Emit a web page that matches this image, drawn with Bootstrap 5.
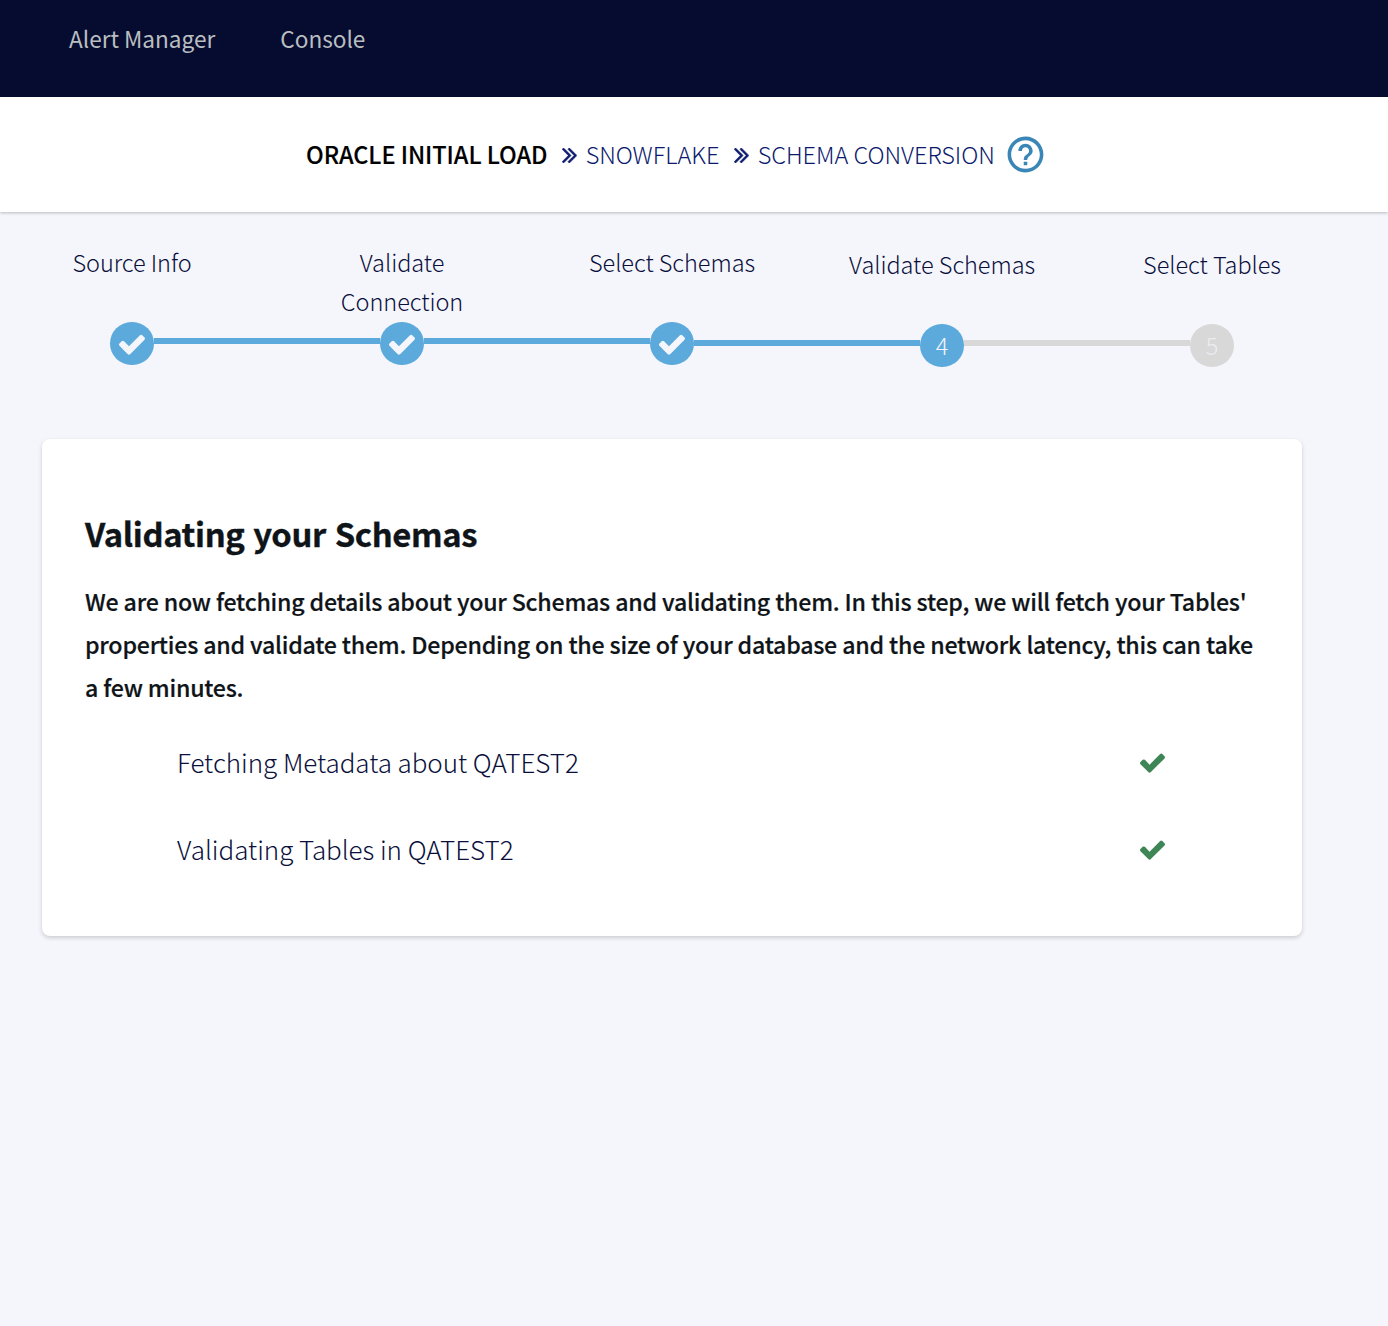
<!DOCTYPE html>
<html lang="en">
<head>
<meta charset="utf-8">
<meta name="viewport" content="width=device-width, initial-scale=1">
<title>Schema Conversion</title>
<link href="https://cdn.jsdelivr.net/npm/bootstrap@5.3.0/dist/css/bootstrap.min.css" rel="stylesheet">
<style>
  body { font-family: "Noto Sans CJK SC", "Noto Sans", sans-serif; background: #f5f6fc; color: #0a0f3c; min-height: 1326px; }
  .topbar { height: 97px; background: #060c2f; padding: 0 69px; gap: 65px; }
  .topbar .nav-link { color: #b9bfc0; font-size: 22.6px; line-height: 78px; }
  .crumbs { height: 115px; padding-left: 306px; font-size: 23.5px; line-height: 40px; font-weight: 300; letter-spacing: -.04px; color: #0b1a6e; box-shadow: 0 1px 3px rgba(0,0,0,.24); }
  .crumbs span { padding-bottom: 2px; }
  .crumbs .origin { color: #000; font-weight: 500; letter-spacing: -.05px; -webkit-text-stroke: .15px #000; }
  .chev { width: 15px; height: 15px; fill: #0b1a6e; }
  .chev-a { margin: 2px 9px 0 14.3px; }
  .help { width: 43px; height: 43px; fill: #3a87b7; margin: 0 0 0 9px; }
  .wizard { margin: 32px 86px 0 42px; }
  .labels { margin: -1px -10px 1px; }
  .step-label { width: 200px; height: 78px; font-size: 23.5px; line-height: 39px; font-weight: 300; letter-spacing: -.04px; text-align: center; }
  .step-narrow { padding: 0 35px; }
  .later { position: relative; top: 2px; }
  .track { padding: 0 68px; height: 43px; }
  .dot { width: 44px; height: 43px; border-radius: 22px; background: #5ca9dc; color: #f5f6fc; font-size: 23.5px; font-weight: 300; line-height: 42px; flex: none; }
  .dot svg { width: 26px; height: 21px; fill: #f5f6fc; margin-top: 2px; }
  .bar { height: 6px; margin-top: -5px; background: #5ca9dc; }
  .todo { background: #d8d8d8; color: #ececf0; }
  .panel { margin: 74px 86px 0 42px; height: 497px; padding: 69px 43px 0; border-radius: 8px; background: #fff; box-shadow: 0 2px 4px rgba(0,0,0,.17); color: #0f1419; }
  .panel h1 { font-size: 32.8px; line-height: 50px; font-weight: 700; letter-spacing: -.35px; word-spacing: 1.5px; -webkit-text-stroke: .35px #0f1419; margin: 0 0 22px; }
  .intro { font-size: 23.2px; line-height: 43px; font-weight: 500; letter-spacing: -.24px; word-spacing: .2px; margin: 0 0 32px; -webkit-text-stroke: .2px #0f1419; white-space: nowrap; }
  .task { height: 44px; margin: 0 94px 43px 92px; font-size: 26px; line-height: 42px; font-weight: 300; letter-spacing: -.04px; color: #0a0f3c; }
  .task span { padding-bottom: 2px; }
  .task svg { width: 25px; height: 20px; fill: #3f8657; }
</style>
<script src="https://cdn.jsdelivr.net/npm/bootstrap@5.3.0/dist/js/bootstrap.bundle.min.js"></script>
</head>
<body>
<svg class="d-none">
  <symbol id="check" viewBox="121 314 1550 1208"><path d="M1671 566q0 40-28 68l-724 724-136 136q-28 28-68 28t-68-28l-136-136-362-362q-28-28-28-68t28-68l136-136q28-28 68-28t68 28l294 295 656-657q28-28 68-28t68 28l136 136q28 28 28 68z"/></symbol>
  <symbol id="angles" viewBox="380 461 998 998"><path stroke="#0b1a6e" stroke-width="36" d="M979 960q0 13-10 23l-466 466q-10 10-23 10t-23-10l-50-50q-10-10-10-23t10-23l393-393-393-393q-10-10-10-23t10-23l50-50q10-10 23-10t23 10l466 466q10 10 10 23zm384 0q0 13-10 23l-466 466q-10 10-23 10t-23-10l-50-50q-10-10-10-23t10-23l393-393-393-393q-10-10-10-23t10-23l50-50q10-10 23-10t23 10l466 466q10 10 10 23z"/></symbol>
</svg>

<nav class="topbar d-flex align-items-start">
  <a class="nav-link" href="#">Alert Manager</a>
  <a class="nav-link" href="#">Console</a>
</nav>

<header class="crumbs bg-white d-flex align-items-center text-nowrap">
  <span class="origin">ORACLE INITIAL LOAD</span>
  <svg class="chev chev-a"><use href="#angles"/></svg>
  <span>SNOWFLAKE</span>
  <svg class="chev chev-a"><use href="#angles"/></svg>
  <span>SCHEMA CONVERSION</span>
  <svg class="help" viewBox="0 0 24 24"><path d="M11 18h2v-2h-2v2zm1-16C6.48 2 2 6.48 2 12s4.48 10 10 10 10-4.48 10-10S17.52 2 12 2zm0 18c-4.41 0-8-3.59-8-8s3.59-8 8-8 8 3.59 8 8-3.59 8-8 8zm0-14c-2.21 0-4 1.79-4 4h2c0-1.1.9-2 2-2s2 .9 2 2c0 2-3 1.75-3 5h2c0-2.25 3-2.5 3-5 0-2.21-1.79-4-4-4z"/></svg>
</header>

<section class="wizard">
  <div class="labels d-flex justify-content-between">
    <div class="step-label">Source Info</div>
    <div class="step-label step-narrow">Validate Connection</div>
    <div class="step-label">Select Schemas</div>
    <div class="step-label later">Validate Schemas</div>
    <div class="step-label later">Select Tables</div>
  </div>
  <div class="track d-flex align-items-center">
    <div class="dot d-flex align-items-center justify-content-center"><svg><use href="#check"/></svg></div>
    <div class="bar flex-fill"></div>
    <div class="dot d-flex align-items-center justify-content-center"><svg><use href="#check"/></svg></div>
    <div class="bar flex-fill"></div>
    <div class="dot d-flex align-items-center justify-content-center"><svg><use href="#check"/></svg></div>
    <div class="bar flex-fill later"></div>
    <div class="dot later text-center">4</div>
    <div class="bar flex-fill later todo"></div>
    <div class="dot later text-center todo">5</div>
  </div>
</section>

<main class="panel">
  <h1>Validating your Schemas</h1>
  <p class="intro">We are now fetching details about your Schemas and validating them. In this step, we will fetch your Tables'<br>properties and validate them. Depending on the size of your database and the network latency, this can take<br>a few minutes.</p>
  <div class="task d-flex justify-content-between align-items-center"><span>Fetching Metadata about QATEST2</span><svg><use href="#check"/></svg></div>
  <div class="task d-flex justify-content-between align-items-center"><span>Validating Tables in QATEST2</span><svg><use href="#check"/></svg></div>
</main>
</body>
</html>
